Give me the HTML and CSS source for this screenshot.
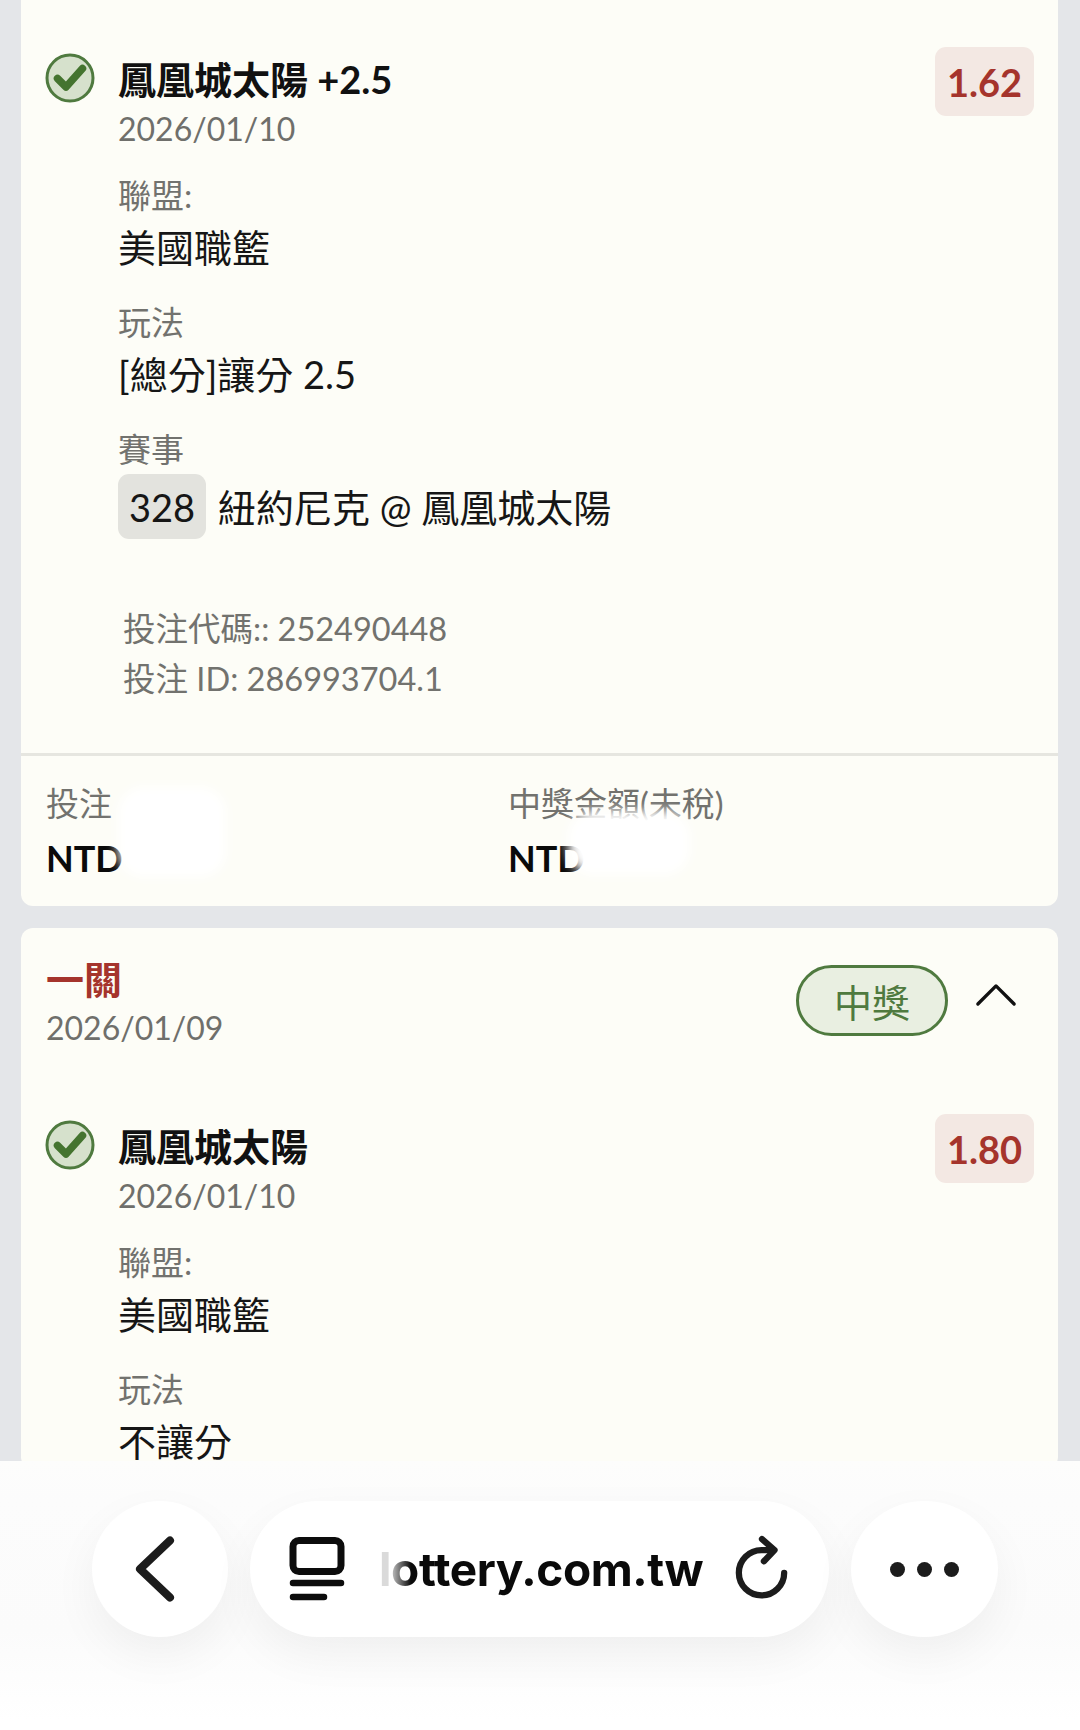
FILE: index.html
```html
<!DOCTYPE html>
<html lang="zh-Hant">
<head>
<meta charset="utf-8">
<title>投注紀錄</title>
<link rel="stylesheet" href="styles.css">
</head>
<body>
<main class="page">
  <section class="card card-first">
    <div class="bet">
      <svg class="check" viewBox="0 0 50 50"><circle cx="25" cy="25" r="23" fill="#d6e1cc" stroke="#4f7a3f" stroke-width="3"/><path d="M12.500 25.500l8.500 8.500L37.500 15.500" fill="none" stroke="#44742f" stroke-width="7.500" stroke-linecap="round" stroke-linejoin="round"/></svg>
      <div class="bet-body">
        <div class="title">鳳凰城太陽 +2.5</div>
        <div class="date">2026/01/10</div>
        <div class="field">
          <div class="label">聯盟:</div>
          <div class="value">美國職籃</div>
        </div>
        <div class="field">
          <div class="label">玩法</div>
          <div class="value">[總分]讓分 2.5</div>
        </div>
        <div class="field">
          <div class="label">賽事</div>
          <div class="match"><span class="chip">328</span><span class="value">紐約尼克 @ 鳳凰城太陽</span></div>
        </div>
      </div>
      <div class="odds">1.62</div>
    </div>
    <div class="ids">
      <div>投注代碼:: 252490448</div>
      <div>投注 ID: 286993704.1</div>
    </div>
    <div class="totals">
      <div class="total">
        <div class="label">投注</div>
        <div class="amount">NTD</div>
        <span class="smudge smudge-a"></span>
      </div>
      <div class="total">
        <div class="label">中獎金額(未稅)</div>
        <div class="amount">NTD</div>
        <span class="smudge smudge-b"></span>
      </div>
    </div>
  </section>

  <section class="card">
    <header class="head">
      <div>
        <div class="leg">一關</div>
        <div class="date">2026/01/09</div>
      </div>
      <div class="status">
        <span class="pill">中獎</span>
        <svg class="chevron" viewBox="0 0 44 26"><path d="M3 23L22 4l19 19" fill="none" stroke="#111" stroke-width="3.500" stroke-linecap="round" stroke-linejoin="round"/></svg>
      </div>
    </header>
    <div class="bet">
      <svg class="check" viewBox="0 0 50 50"><circle cx="25" cy="25" r="23" fill="#d6e1cc" stroke="#4f7a3f" stroke-width="3"/><path d="M12.500 25.500l8.500 8.500L37.500 15.500" fill="none" stroke="#44742f" stroke-width="7.500" stroke-linecap="round" stroke-linejoin="round"/></svg>
      <div class="bet-body">
        <div class="title">鳳凰城太陽</div>
        <div class="date">2026/01/10</div>
        <div class="field">
          <div class="label">聯盟:</div>
          <div class="value">美國職籃</div>
        </div>
        <div class="field">
          <div class="label">玩法</div>
          <div class="value">不讓分</div>
        </div>
      </div>
      <div class="odds">1.80</div>
    </div>
  </section>
</main>

<nav class="browser">
  <div class="round back">
    <svg class="ico-back" viewBox="0 0 40 66"><path d="M35 4.500L5 33l30 28.500" fill="none" stroke="#1c1c1c" stroke-width="8" stroke-linecap="round" stroke-linejoin="round"/></svg>
  </div>
  <div class="url">
    <svg class="ico-tab" viewBox="0 0 56 64"><rect x="4" y="3.500" width="48" height="31" rx="6" fill="none" stroke="#0c0c0c" stroke-width="7"/><path d="M4 46h48M4 60h31" fill="none" stroke="#0c0c0c" stroke-width="6.500" stroke-linecap="round"/></svg>
    <span class="url-text">lottery.com.tw</span>
    <svg class="ico-reload" viewBox="0 0 56 66"><path d="M51 39A23.500 23.500 0 1 1 27.500 15.500h10" fill="none" stroke="#1c1c1c" stroke-width="6.500" stroke-linecap="round"/><path d="M28 4L41 15.500 30 27" fill="none" stroke="#1c1c1c" stroke-width="6.500" stroke-linecap="round" stroke-linejoin="round"/></svg>
  </div>
  <div class="round more">
    <span class="dot"></span><span class="dot"></span><span class="dot"></span>
  </div>
</nav>
</body>
</html>
```

FILE: styles.css
```css
* { box-sizing: border-box; }

html, body {
  margin: 0;
  height: 1730px;
  overflow: hidden;
}

body {
  position: relative;
  background: #e4e6e9;
  font-family: Lato, "Noto Sans CJK TC", sans-serif;
  color: #111;
}

.page {
  display: flex;
  flex-direction: column;
  gap: 22px;
  padding: 0 22px 0 21px;
}

.card {
  background: #fdfdf7;
  border-radius: 12px;
  padding-top: 27px;
}

.card-first {
  border-radius: 0 0 12px 12px;
  padding-top: 47px;
}

.head {
  display: flex;
  justify-content: space-between;
  padding: 0 25px;
  height: 159px;
}

.leg {
  font-size: 38px;
  line-height: 48px;
  font-weight: 700;
  color: #a5342c;
}

.status {
  display: flex;
  align-items: flex-start;
  gap: 27px;
  padding: 10px 16px 0 0;
}

.pill {
  display: flex;
  align-items: center;
  justify-content: center;
  width: 152px;
  height: 71px;
  border: 3px solid #4f7a3f;
  border-radius: 36px;
  background: #e9efe1;
  color: #4f7a3f;
  font-size: 38px;
}

.chevron {
  width: 42px;
  height: 25px;
  margin-top: 17px;
}

.bet {
  display: flex;
  align-items: flex-start;
  padding: 0 24px;
}

.check {
  flex: none;
  width: 50px;
  height: 50px;
  margin: 6px 23px 0 0;
}

.bet-body {
  flex: 1;
  padding-top: 8px;
}

.title {
  font-size: 38px;
  line-height: 49px;
  font-weight: 700;
  color: #111;
}

.date {
  font-size: 32px;
  line-height: 48px;
  margin-top: 1px;
  color: #6f6f6b;
}

.field {
  margin-top: 18px;
}

.field + .field {
  margin-top: 23px;
}

.label {
  font-size: 33px;
  line-height: 48px;
  color: #72726e;
}

.value {
  font-size: 38px;
  line-height: 56px;
  color: #161616;
}

.match {
  display: flex;
  align-items: center;
  gap: 12px;
  margin-top: 1px;
}

.chip {
  display: flex;
  align-items: center;
  justify-content: center;
  width: 88px;
  height: 65px;
  border-radius: 11px;
  background: #e3e3de;
  font-size: 38px;
  color: #161616;
}

.odds {
  flex: none;
  display: flex;
  align-items: center;
  justify-content: center;
  width: 99px;
  height: 69px;
  border-radius: 11px;
  background: #f3e8e3;
  color: #a5342c;
  font-size: 38px;
  font-weight: 700;
}

.ids {
  margin-top: 65px;
  padding: 0 0 49px 102px;
  font-size: 32.500px;
  line-height: 50px;
  color: #72726e;
}

.totals {
  display: grid;
  grid-template-columns: 462px 1fr;
  height: 153px;
  padding: 23px 25px 0;
  border-top: 3px solid #e6e6e0;
}

.total {
  position: relative;
}

.amount {
  font-size: 36px;
  line-height: 52px;
  margin-top: 5px;
  font-weight: 700;
  color: #0a0a0a;
}

.smudge {
  position: absolute;
  background: #fff;
  border-radius: 26px;
  filter: blur(6px);
}

.smudge-a {
  left: 72px;
  top: 8px;
  width: 108px;
  height: 90px;
}

.smudge-b {
  left: 60px;
  top: 32px;
  width: 122px;
  height: 64px;
}

/* browser toolbar lying over the page */
.browser {
  position: absolute;
  left: 0;
  right: 0;
  bottom: 0;
  height: 269px;
  display: flex;
  gap: 22px;
  padding: 40px 0 0 92px;
  background: linear-gradient(#fdfdfc 0, #fcfcfc 40px, #fbfbfb 170px, #fff 260px);
}

.round,
.url {
  height: 136px;
  background: #fff;
  box-shadow: 0 18px 46px rgba(0, 0, 0, .05);
}

.round {
  display: flex;
  align-items: center;
  justify-content: center;
  border-radius: 50%;
}

.back {
  width: 136px;
}

.ico-back {
  width: 40px;
  height: 66px;
  margin-left: -10px;
}

.url {
  display: flex;
  align-items: center;
  width: 579px;
  border-radius: 68px;
  padding-left: 39px;
}

.ico-tab {
  flex: none;
  width: 56px;
  height: 64px;
}

.url-text {
  margin-left: 34px;
  font-family: Inter, "Liberation Sans", sans-serif;
  font-size: 46px;
  font-weight: 700;
  letter-spacing: -0.4px;
  color: #0a0a0a;
  -webkit-mask-image: linear-gradient(90deg, rgba(0, 0, 0, .15) 0, rgba(0, 0, 0, .15) 10px, #000 32px);
  mask-image: linear-gradient(90deg, rgba(0, 0, 0, .15) 0, rgba(0, 0, 0, .15) 10px, #000 32px);
}

.ico-reload {
  flex: none;
  width: 54px;
  height: 64px;
  margin: -4px 0 0 32px;
}

.more {
  width: 147px;
  gap: 12px;
}

.dot {
  width: 15px;
  height: 15px;
  border-radius: 50%;
  background: #1c1c1c;
}
```
